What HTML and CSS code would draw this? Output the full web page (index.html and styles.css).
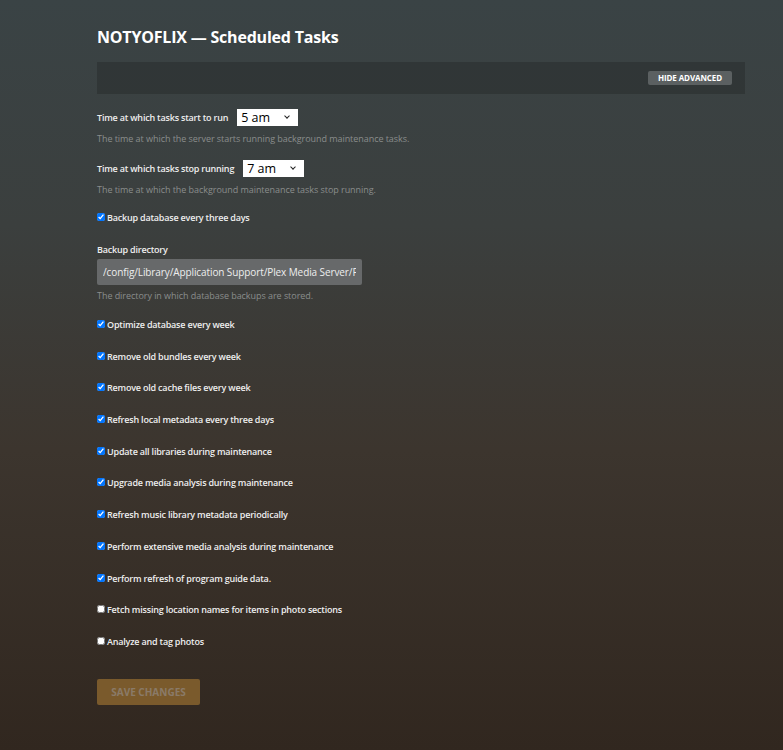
FILE: index.html
```html
<!DOCTYPE html>
<html lang="en">

<head>
    <meta charset="UTF-8">
    <meta name="viewport" content="width=device-width, initial-scale=1.0">
    <title>NOTYOFLIX - Scheduled Tasks</title>
    <link rel="stylesheet" href="styles.css">
</head>

<body>
    <div class="page">
        <h1 class="page-title">NOTYOFLIX — Scheduled Tasks</h1>

        <div class="toolbar">
            <button type="button" class="btn-advanced">HIDE ADVANCED</button>
        </div>

        <form class="settings-form">
            <div class="setting">
                <div class="setting-row">
                    <label for="butlerStartHour">Time at which tasks start to run</label>
                    <span class="select-wrap">
                        <select id="butlerStartHour" class="select-hour">
                            <option>5 am</option>
                        </select>
                    </span>
                </div>
                <p class="help">The time at which the server starts running background maintenance tasks.</p>
            </div>

            <div class="setting">
                <div class="setting-row">
                    <label for="butlerEndHour">Time at which tasks stop running</label>
                    <span class="select-wrap">
                        <select id="butlerEndHour" class="select-hour">
                            <option>7 am</option>
                        </select>
                    </span>
                </div>
                <p class="help">The time at which the background maintenance tasks stop running.</p>
            </div>

            <label class="check"><input type="checkbox" checked> Backup database every three days</label>

            <div class="setting setting-dir">
                <label class="field-label" for="backupDir">Backup directory</label>
                <input type="text" id="backupDir" class="text-input" value="/config/Library/Application Support/Plex Media Server/Plug-in Support/Databases">
                <p class="help">The directory in which database backups are stored.</p>
            </div>

            <div class="check-list">
                <label class="check"><input type="checkbox" checked> Optimize database every week</label>
                <label class="check"><input type="checkbox" checked> Remove old bundles every week</label>
                <label class="check"><input type="checkbox" checked> Remove old cache files every week</label>
                <label class="check"><input type="checkbox" checked> Refresh local metadata every three days</label>
                <label class="check"><input type="checkbox" checked> Update all libraries during maintenance</label>
                <label class="check"><input type="checkbox" checked> Upgrade media analysis during maintenance</label>
                <label class="check"><input type="checkbox" checked> Refresh music library metadata periodically</label>
                <label class="check"><input type="checkbox" checked> Perform extensive media analysis during maintenance</label>
                <label class="check"><input type="checkbox" checked> Perform refresh of program guide data.</label>
                <label class="check"><input type="checkbox"> Fetch missing location names for items in photo sections</label>
                <label class="check"><input type="checkbox"> Analyze and tag photos</label>
            </div>

            <button type="submit" class="btn-save" disabled>SAVE CHANGES</button>
        </form>
    </div>
</body>

</html>
```

FILE: styles.css
```css
html,
body {
    margin: 0;
    padding: 0;
    min-height: 100%;
}

body {
    font-family: 'Open Sans', 'Noto Sans', sans-serif;
    color: #eee;
    background-color: #36302a;
    background-image: linear-gradient(180deg, #3a4345 0%, #3b3f3e 30%, #3c352e 60%, #31271f 100%);
    min-height: 750px;
}

.page {
    width: 648px;
    padding: 25px 0 40px 97px;
}

.page-title {
    margin: 0 0 13px;
    font-size: 16px;
    line-height: 24px;
    font-weight: 700;
    letter-spacing: -0.2px;
    color: #fff;
}

.toolbar {
    height: 32px;
    background: rgba(34, 38, 38, 0.4);
    display: flex;
    align-items: center;
    justify-content: flex-end;
    padding-right: 13px;
}

.btn-advanced {
    font-family: 'Open Sans', sans-serif;
    font-size: 8px;
    font-weight: 700;
    letter-spacing: -0.1px;
    color: #fff;
    background: #5b6061;
    border: none;
    border-radius: 2px;
    height: 14px;
    width: 84px;
    padding: 0;
    line-height: 14px;
}

.settings-form {
    margin-top: 15px;
    font-size: 9px;
    font-weight: 600;
    letter-spacing: -0.2px;
}

.setting-row {
    display: flex;
    align-items: center;
    gap: 9px;
    height: 17px;
}

.select-wrap {
    position: relative;
    display: inline-block;
}

.select-wrap::after {
    content: '';
    position: absolute;
    right: 9px;
    top: 5px;
    width: 3px;
    height: 3px;
    border-right: 1.5px solid #222;
    border-bottom: 1.5px solid #222;
    transform: rotate(45deg);
    pointer-events: none;
}

.select-hour {
    -webkit-appearance: none;
    appearance: none;
    display: block;
    width: 61px;
    height: 17px;
    font-family: 'Open Sans', sans-serif;
    font-size: 12.5px;
    font-weight: 400;
    color: #000;
    background: #fff;
    border: none;
    border-radius: 0;
    padding: 0 0 0 4px;
    line-height: 17px;
}

.help {
    margin: 6px 0 14px;
    line-height: 14px;
    font-size: 9px;
    font-weight: 400;
    letter-spacing: -0.05px;
    color: #8a8d8c;
}

.setting-dir {
    margin-top: 18px;
}

.field-label {
    display: block;
    line-height: 14px;
    margin-bottom: 2px;
}

.text-input {
    display: block;
    box-sizing: border-box;
    width: 265px;
    height: 26px;
    padding: 0 6px;
    border: none;
    border-radius: 2px;
    background: #67696a;
    color: #eee;
    font-family: 'Open Sans', sans-serif;
    font-size: 10px;
    font-weight: 400;
    letter-spacing: -0.1px;
}

.setting-dir .help {
    margin-top: 4px;
    margin-bottom: 15px;
}

.check {
    display: flex;
    align-items: center;
    height: 14px;
    line-height: 14px;
}

.check input {
    width: 8px;
    height: 8px;
    margin: 0 2px 2px 0;
}

.check-list {
    display: flex;
    flex-direction: column;
    gap: 17.7px;
}

.btn-save {
    margin-top: 30px;
    width: 103px;
    height: 26px;
    font-family: 'Open Sans', sans-serif;
    font-size: 10px;
    font-weight: 700;
    color: #8a7a68;
    background: #7a5a2c;
    border: none;
    border-radius: 2px;
    padding: 0;
}
```
